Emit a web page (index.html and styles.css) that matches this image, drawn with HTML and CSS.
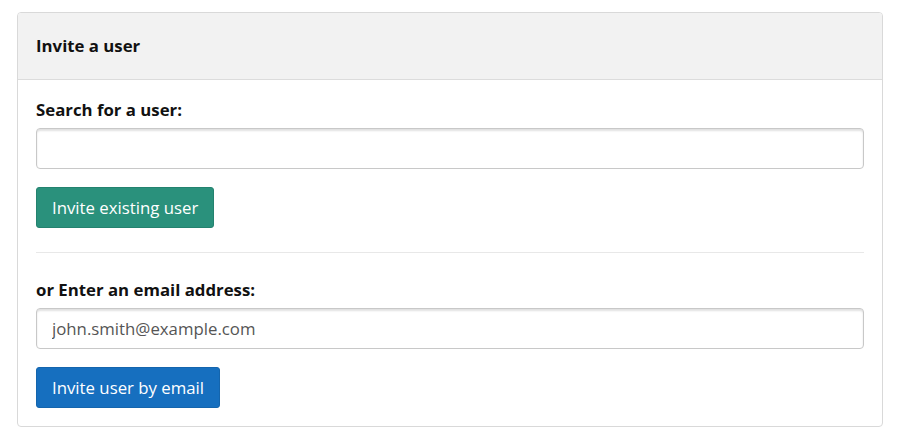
FILE: index.html
```html
<!DOCTYPE html>
<html lang="en">
<head>
<meta charset="utf-8">
<title>Invite a user</title>
<link rel="stylesheet" href="styles.css">
</head>
<body>
<div class="page">
  <section class="panel">
    <header class="panel-heading">Invite a user</header>
    <div class="panel-body">
      <form class="invite-form">
        <label class="field-label" for="user-search">Search for a user:</label>
        <input class="field-input" id="user-search" type="text">
        <button class="btn btn-green" type="button">Invite existing user</button>
      </form>
      <hr class="divider">
      <form class="invite-form">
        <label class="field-label" for="user-email">or Enter an email address:</label>
        <input class="field-input" id="user-email" type="email" placeholder="john.smith@example.com">
        <button class="btn btn-blue" type="button">Invite user by email</button>
      </form>
    </div>
  </section>
</div>
</body>
</html>
```
FILE: styles.css
```css
html, body {
  margin: 0;
  padding: 0;
  background: #fff;
}
body {
  font-family: "Open Sans", "Noto Sans", sans-serif;
  font-size: 16.8px;
  line-height: 24px;
  color: #111;
}
.page {
  padding: 12px 17px 0 17px;
}
.panel {
  border: 1px solid #d9d9d9;
  border-radius: 4px;
  background: #fff;
  overflow: hidden;
}
.panel-heading {
  background: #f2f2f2;
  border-bottom: 1px solid #dcdcdc;
  padding: 21px 18px;
  font-weight: 700;
  line-height: 24px;
  color: #111;
}
.panel-body {
  padding: 18px 18px 18px 18px;
}
.invite-form {
  display: flex;
  flex-direction: column;
  align-items: flex-start;
  margin: 0;
}
.field-label {
  font-weight: 700;
  line-height: 24px;
  margin-bottom: 6px;
}
.field-input {
  box-sizing: border-box;
  width: 100%;
  height: 41px;
  padding: 0 15px;
  border: 1px solid #c8c8c8;
  border-radius: 4px;
  box-shadow: inset 0 2px 2px rgba(0,0,0,0.12);
  font-family: inherit;
  font-size: 16.8px;
  color: #333;
  background: #fff;
  outline: none;
}
.field-input::placeholder {
  color: #555;
  opacity: 1;
}
.btn {
  margin-top: 18px;
  height: 41px;
  padding: 0 15px;
  border: 1px solid transparent;
  border-radius: 3px;
  font-family: inherit;
  font-size: 16.8px;
  line-height: 24px;
  color: #fff;
  cursor: pointer;
}
.btn-green {
  background: #2a917c;
  border-color: #24826f;
}
.btn-blue {
  background: #166fbf;
  border-color: #1465ad;
}
.divider {
  border: 0;
  border-top: 1px solid #e8e8e8;
  margin: 24px 0 25px 0;
}
```
